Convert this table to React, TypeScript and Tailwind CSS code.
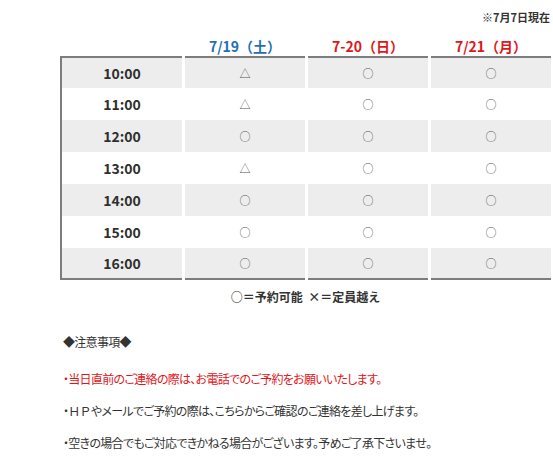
import React from "react";

const dates = [
  { label: "7/19（土）", color: "text-[#1f6fb8]" },
  { label: "7-20（日）", color: "text-[#e0161b]" },
  { label: "7/21（月）", color: "text-[#e0161b]" },
];

const rows = [
  { time: "10:00", marks: ["△", "○", "○"] },
  { time: "11:00", marks: ["△", "○", "○"] },
  { time: "12:00", marks: ["○", "○", "○"] },
  { time: "13:00", marks: ["△", "○", "○"] },
  { time: "14:00", marks: ["○", "○", "○"] },
  { time: "15:00", marks: ["○", "○", "○"] },
  { time: "16:00", marks: ["○", "○", "○"] },
];

function Cell({
  children,
  row,
  first,
  className = "",
}: {
  children: React.ReactNode;
  row: number;
  first?: boolean;
  className?: string;
}) {
  const shaded = row % 2 === 0;
  return (
    <div
      className={[
        "flex h-8 items-center justify-center border-[#7d7d7d]",
        shaded ? "bg-[#ededed]" : "bg-white",
        row === 0 ? "border-t-2" : "",
        row === rows.length - 1 ? "border-b-2" : "",
        first ? "border-l-2" : "",
        className,
      ].join(" ")}
    >
      {children}
    </div>
  );
}

export default function App() {
  return (
    <div className="h-[456px] w-[553px] overflow-hidden bg-white font-['Noto_Sans_CJK_JP',sans-serif] text-[#333]">
      {/* date stamp */}
      <p className="pr-[3px] pt-[9px] text-right text-[11px] font-bold leading-4">
        ※7月7日現在
      </p>

      {/* schedule */}
      <div className="ml-[60px] mt-[11px] grid w-[491px] grid-cols-[122px_120px_120px_120px] gap-x-[3px]">
        <div className="h-5" />
        {dates.map((d) => (
          <div
            key={d.label}
            className={`flex h-5 items-center justify-center text-[14px] font-bold ${d.color}`}
          >
            {d.label}
          </div>
        ))}

        {rows.map((r, i) => (
          <React.Fragment key={r.time}>
            <Cell row={i} first className="text-[14px] font-bold text-[#2f2f2f]">
              {r.time}
            </Cell>
            {r.marks.map((m, j) => (
              <Cell key={j} row={i} className="text-[11px] text-[#555]">
                {m}
              </Cell>
            ))}
          </React.Fragment>
        ))}
      </div>

      <p className="ml-[60px] mt-[9px] w-[491px] text-center text-[12px] font-bold leading-4">
        ○＝予約可能&nbsp;&nbsp;×＝定員越え
      </p>

      {/* notes */}
      <div className="ml-[63px] mt-[29px] flex flex-col gap-[16px] text-[12px] leading-4 tracking-[-0.7px] [font-feature-settings:'palt']">
        <p className="mb-[5px]">◆注意事項◆</p>
        <p className="text-[#e0161b]">・当日直前のご連絡の際は、お電話でのご予約をお願いいたします。</p>
        <p>
          ・<span className="[font-feature-settings:normal]">ＨＰ</span>やメールでご予約の際は、こちらからご確認のご連絡を差し上げます。
        </p>
        <p>・空きの場合でもご対応できかねる場合がございます。予めご了承下さいませ。</p>
      </div>
    </div>
  );
}
